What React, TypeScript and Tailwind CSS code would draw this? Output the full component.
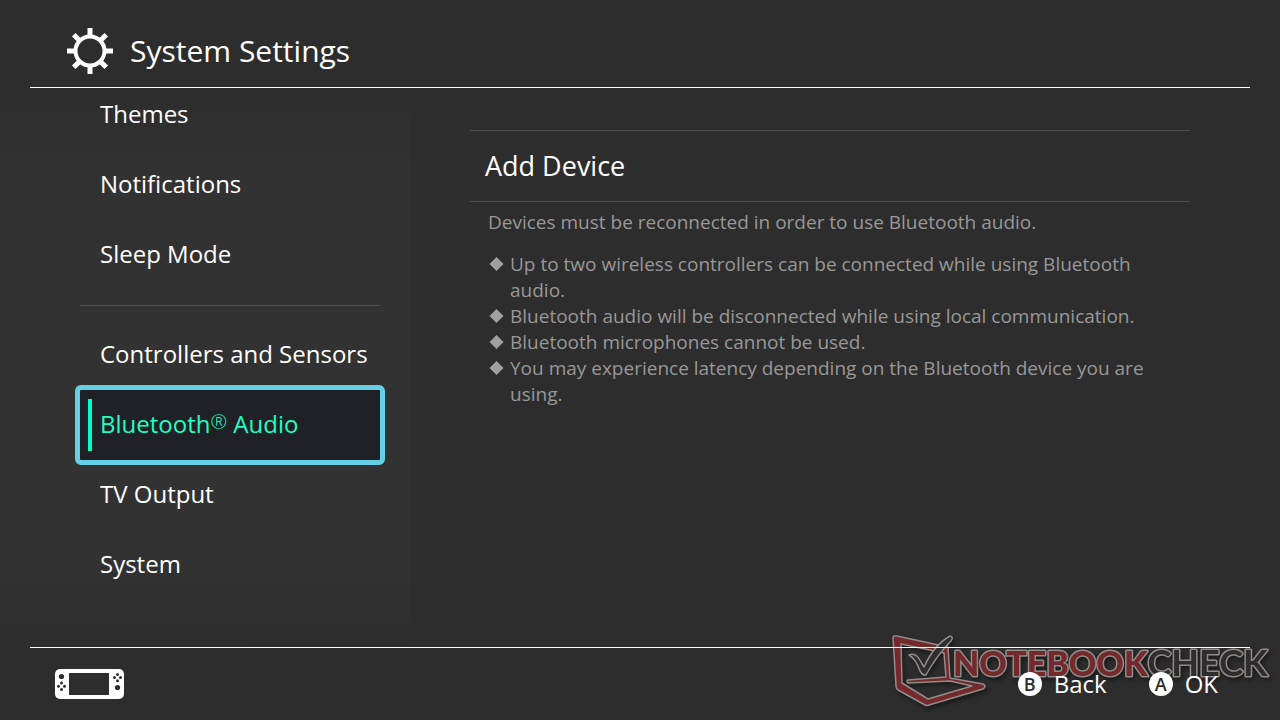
import { useState } from "react";

const menuGroups = [
  ["Themes", "Notifications", "Sleep Mode"],
  ["Controllers and Sensors", "Bluetooth Audio", "TV Output", "System"],
];

const notes = [
  "Up to two wireless controllers can be connected while using Bluetooth audio.",
  "Bluetooth audio will be disconnected while using local communication.",
  "Bluetooth microphones cannot be used.",
  "You may experience latency depending on the Bluetooth device you are using.",
];

function GearIcon() {
  return (
    <svg className="w-12 h-12" viewBox="0 0 48 48" fill="none" stroke="white" aria-hidden="true">
      <circle cx="24" cy="24" r="14.5" strokeWidth="4" />
      {[0, 45, 90, 135, 180, 225, 270, 315].map((angle) => (
        <path key={angle} d="M24 10V1" strokeWidth="5" transform={`rotate(${angle} 24 24)`} />
      ))}
    </svg>
  );
}

function ConsoleIcon() {
  return (
    <svg className="w-[70px] h-[30px]" viewBox="0 0 70 30" aria-hidden="true">
      <rect width="69" height="30" rx="5" fill="white" />
      <g fill="#2d2d2d">
        <rect x="14" y="4" width="40" height="22" />
        <circle cx="6.5" cy="7.5" r="2.6" />
        <circle cx="6.5" cy="14" r="1.5" />
        <circle cx="3.5" cy="17.3" r="1.5" />
        <circle cx="9.5" cy="17.3" r="1.5" />
        <circle cx="6.5" cy="20.5" r="1.5" />
        <circle cx="62.5" cy="5.5" r="1.5" />
        <circle cx="59.5" cy="8.5" r="1.5" />
        <circle cx="65.5" cy="8.5" r="1.5" />
        <circle cx="62.5" cy="11.7" r="1.5" />
        <circle cx="62.5" cy="18.5" r="2.6" />
      </g>
    </svg>
  );
}

function Watermark() {
  const laptop = "M13 13Q13 10 17 11L68 22L70 53L103 59Q107 61 103 64L49 80Q47 81 45 80L18 65Q16 64 16 61Z";

  return (
    <div className="absolute right-0 bottom-0 -z-10 pointer-events-none">
      <svg className="w-[400px] h-[95px] drop-shadow-[2px_3px_2px_#00000066]" viewBox="0 0 400 95" aria-hidden="true">
        <g stroke="#918b88" strokeWidth="1.5" strokeLinejoin="round" strokeLinecap="round">
          <path
            d={`${laptop} M21 19L22 58L48 74L92 61L70 56L28 58Q26 56 28 55L66 52L64 28Z`}
            fill="#75292c"
            fillRule="evenodd"
          />
          <path
            d="M29 30Q36 27 41 37L44 42Q54 20 70 11Q74 12 71 16Q57 30 46 50Q43 51 40 46Q36 34 29 30Z"
            fill="#2d2d2d"
          />
        </g>
        <text
          x="73"
          y="51"
          className="font-['Lato',sans-serif] font-black text-[34px]"
          stroke="#918b88"
          strokeWidth="3"
          paintOrder="stroke"
          strokeLinejoin="round"
        >
          <tspan fill="#75292c">NOTEBOOK</tspan>
          <tspan fill="#2d2d2d" className="font-bold text-[36px]">CHECK</tspan>
        </text>
      </svg>
    </div>
  );
}

function ActionButton({ letter, label }: { letter: string; label: string }) {
  return (
    <button className="flex items-center gap-3 text-2xl">
      <span className="w-6 h-6 rounded-full bg-white text-[#2d2d2d] text-lg leading-6 font-semibold text-center" aria-hidden="true">
        {letter}
      </span>
      {label}
    </button>
  );
}

export default function App() {
  const [selected, setSelected] = useState("Bluetooth Audio");

  return (
    <div className="relative isolate min-h-screen flex flex-col bg-[#2d2d2d] text-white font-['Open_Sans','Noto_Sans',sans-serif]">
      {/* Header */}
      <header className="mx-[30px] h-[88px] px-9 pt-[14px] flex items-center gap-4 border-b border-white">
        <GearIcon />
        <h1 className="text-[30px] leading-10">System Settings</h1>
      </header>

      <div className="flex-1 flex">
        {/* Settings menu */}
        <nav className="w-[410px] shrink-0 pl-20 pr-[30px] overflow-hidden bg-[linear-gradient(#2d2d2d,#323232_15%,#323232_85%,#2d2d2d)]">
          <div className="-mt-2">
            {menuGroups.map((group, index) => (
              <ul key={index} className={index > 0 ? "mt-[15px] pt-[14px] border-t border-[#505050]" : ""}>
                {group.map((item) => (
                  <li key={item}>
                    <button
                      onClick={() => setSelected(item)}
                      className={`w-full h-[70px] pb-0.5 flex items-center text-2xl text-left ${
                        selected === item
                          ? "pl-2 gap-2 bg-[#202127] text-[#1effc3] outline-5 outline-[#64d0e6] rounded-[1px]"
                          : "pl-5"
                      }`}
                    >
                      {selected === item && <span className="w-1 h-[52px] mt-0.5 bg-[#00ffc5]" />}
                      {item === "Bluetooth Audio" ? (
                        <span>
                          Bluetooth<sup className="text-xl leading-none font-light -top-1">®</sup> Audio
                        </span>
                      ) : (
                        item
                      )}
                    </button>
                  </li>
                ))}
              </ul>
            ))}
          </div>
        </nav>

        {/* Bluetooth audio panel */}
        <main className="flex-1 pl-[60px] pr-[90px] pt-[42px]">
          <button className="w-full h-[72px] px-[15px] border-y border-[#505050] text-left text-[27px]">
            Add Device
          </button>
          <div className="pl-[18px] pr-10 pt-[7px] text-[19px] leading-[26px] text-[#989898]">
            <p>Devices must be reconnected in order to use Bluetooth audio.</p>
            <ul className="mt-4">
              {notes.map((note) => (
                <li key={note} className="flex">
                  <svg className="w-[17px] h-[26px] mr-[5px] shrink-0" viewBox="0 0 17 26" aria-hidden="true">
                    <path d="M8.5 6L15.5 13L8.5 20L1.5 13Z" fill="#a0a0a0" />
                  </svg>
                  {note}
                </li>
              ))}
            </ul>
          </div>
        </main>
      </div>

      {/* Footer */}
      <Watermark />
      <footer className="mx-[30px] h-[73px] pl-[25px] pr-8 flex items-center justify-between border-t border-white">
        <ConsoleIcon />
        <div className="flex gap-[42px]">
          <ActionButton letter="B" label="Back" />
          <ActionButton letter="A" label="OK" />
        </div>
      </footer>
    </div>
  );
}
